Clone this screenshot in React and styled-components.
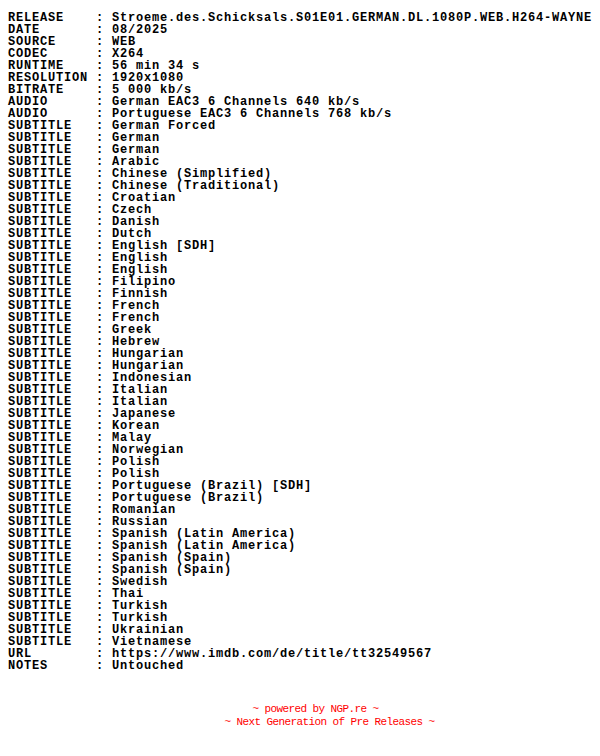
import React from "react";
import styled, { createGlobalStyle } from "styled-components";

const GlobalStyle = createGlobalStyle`
  html, body {
    margin: 0;
    padding: 0;
    background: #ffffff;
  }
`;

const Page = styled.div`
  padding: 12px 8px 0 8px;
  color: #000000;
`;

const Nfo = styled.div`
  font-family: "Liberation Mono", "DejaVu Sans Mono", monospace;
  font-weight: bold;
  font-size: 12px;
  letter-spacing: 0.8px;
  line-height: 12px;
  white-space: pre;
`;

const Row = styled.div`
  display: grid;
  grid-template-columns: 88px 16px auto;
  height: 12px;
`;

const Label = styled.span``;
const Sep = styled.span``;
const Value = styled.span``;

const Footer = styled.div`
  margin-top: 31px;
  font-family: "Liberation Mono", "DejaVu Sans Mono", monospace;
  font-size: 11px;
  letter-spacing: -0.6px;
  line-height: 13px;
  color: #ff0000;
  text-align: center;
`;

const FooterLine = styled.div`
  padding-left: ${(p) => p.shift}px;
  white-space: pre;
`;

const subtitles = [
  "German Forced", "German", "German", "Arabic", "Chinese (Simplified)",
  "Chinese (Traditional)", "Croatian", "Czech", "Danish", "Dutch",
  "English [SDH]", "English", "English", "Filipino", "Finnish", "French",
  "French", "Greek", "Hebrew", "Hungarian", "Hungarian", "Indonesian",
  "Italian", "Italian", "Japanese", "Korean", "Malay", "Norwegian", "Polish",
  "Polish", "Portuguese (Brazil) [SDH]", "Portuguese (Brazil)", "Romanian",
  "Russian", "Spanish (Latin America)", "Spanish (Latin America)",
  "Spanish (Spain)", "Spanish (Spain)", "Swedish", "Thai", "Turkish",
  "Turkish", "Ukrainian", "Vietnamese",
];

const rows = [
  ["RELEASE", "Stroeme.des.Schicksals.S01E01.GERMAN.DL.1080P.WEB.H264-WAYNE"],
  ["DATE", "08/2025"],
  ["SOURCE", "WEB"],
  ["CODEC", "X264"],
  ["RUNTIME", "56 min 34 s"],
  ["RESOLUTION", "1920x1080"],
  ["BITRATE", "5 000 kb/s"],
  ["AUDIO", "German EAC3 6 Channels 640 kb/s"],
  ["AUDIO", "Portuguese EAC3 6 Channels 768 kb/s"],
  ...subtitles.map((s) => ["SUBTITLE", s]),
  ["URL", "https://www.imdb.com/de/title/tt32549567"],
  ["NOTES", "Untouched"],
];

export default function App() {
  return (
    <Page>
      <GlobalStyle />
      <Nfo>
        {rows.map(([label, value], i) => (
          <Row key={i}>
            <Label>{label}</Label>
            <Sep>:</Sep>
            <Value>{value}</Value>
          </Row>
        ))}
      </Nfo>
      <Footer>
        <FooterLine shift={31}>~ powered by NGP.re ~</FooterLine>
        <FooterLine shift={59}>~ Next Generation of Pre Releases ~</FooterLine>
      </Footer>
    </Page>
  );
}
